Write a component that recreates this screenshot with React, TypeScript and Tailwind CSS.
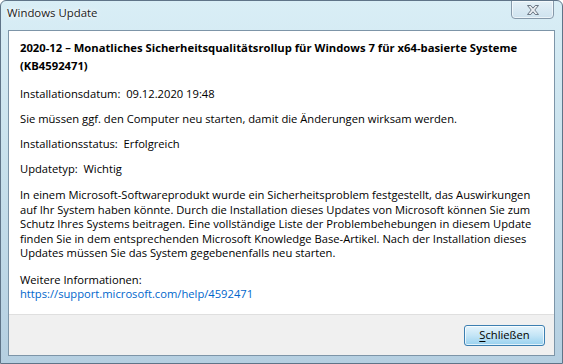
import React from "react";

function CloseGlyph() {
  return (
    <svg width="14" height="12" viewBox="0 0 14 12">
      <path
        d="M1.5 1.5 H4.8 L7 4.2 L9.2 1.5 H12.5 L8.8 6 L12.5 10.5 H9.2 L7 7.8 L4.8 10.5 H1.5 L5.2 6 Z"
        fill="#e9edf1"
        stroke="#6b7784"
        strokeWidth="1"
        strokeLinejoin="round"
      />
    </svg>
  );
}

export default function App() {
  const font = { fontFamily: '"Segoe UI", "Open Sans", "Noto Sans", sans-serif' };
  return (
    <div
      className="w-[563px] h-[364px] flex flex-col rounded-t-[6px] border border-[#5f7488] bg-gradient-to-b from-[#d9eef6] via-[#c6dfeb] to-[#b5cfe1] overflow-hidden text-[11.2px] text-black"
      style={font}
    >
      {/* title bar */}
      <div className="h-[29px] flex items-start justify-between pl-[6px] pr-[8px]">
        <div className="pt-[4px] text-[11.4px] leading-[16px] text-[#1b1b1b] [text-shadow:0_0_6px_#fff,0_0_3px_#fff]">
          Windows Update
        </div>
        <div className="w-[43px] h-[19px] -mt-px flex items-center justify-center rounded-b-[4px] border border-[#8699aa] bg-gradient-to-b from-[#e7f1f7]/80 to-[#c9dcea]/60 shadow-[inset_0_0_0_1px_rgba(255,255,255,0.6)]">
          <CloseGlyph />
        </div>
      </div>

      {/* client area */}
      <div className="flex-1 mx-[7px] mb-[7px] flex flex-col border border-[#7d95a8] bg-white">
        <div className="flex-1 pl-[11px] pr-[10px] pt-[8px]">
          <div className="font-bold text-[11.25px] leading-[18px] whitespace-nowrap">
            2020-12 – Monatliches Sicherheitsqualitätsrollup für Windows 7 für x64-basierte Systeme
            <br />
            (KB4592471)
          </div>
          <div className="mt-[11px] leading-[16px] whitespace-nowrap">
            Installationsdatum:&nbsp; 09.12.2020 19:48
          </div>
          <div className="mt-[9px] leading-[16px] whitespace-nowrap">
            Sie müssen ggf. den Computer neu starten, damit die Änderungen wirksam werden.
          </div>
          <div className="mt-[9px] leading-[16px] whitespace-nowrap">
            Installationsstatus:&nbsp; Erfolgreich
          </div>
          <div className="mt-[9px] leading-[16px] whitespace-nowrap">
            Updatetyp:&nbsp; Wichtig
          </div>
          <div className="mt-[11px] leading-[14.5px] whitespace-nowrap">
            In einem Microsoft-Softwareprodukt wurde ein Sicherheitsproblem festgestellt, das Auswirkungen
            <br />
            auf Ihr System haben könnte. Durch die Installation dieses Updates von Microsoft können Sie zum
            <br />
            Schutz Ihres Systems beitragen. Eine vollständige Liste der Problembehebungen in diesem Update
            <br />
            finden Sie in dem entsprechenden Microsoft Knowledge Base-Artikel. Nach der Installation dieses
            <br />
            Updates müssen Sie das System gegebenenfalls neu starten.
          </div>
          <div className="mt-[12px] leading-[14.5px] whitespace-nowrap">
            Weitere Informationen:
            <br />
            <span className="text-[#0066cc]">https://support.microsoft.com/help/4592471</span>
          </div>
        </div>

        {/* footer */}
        <div className="h-[41px] flex items-center justify-end pr-[9px] bg-[#f0f0f0] border-t border-[#dfdfdf]">
          <button className="w-[81px] h-[21px] rounded-[3px] border border-[#3c7fb1] bg-gradient-to-b from-[#e5f4fc] via-[#c4e5f6] to-[#98d1ef] shadow-[inset_0_0_0_1px_rgba(255,255,255,0.7)] text-[11.2px] leading-[16px] text-black">
            <span className="underline underline-offset-2">S</span>chließen
          </button>
        </div>
      </div>
    </div>
  );
}
